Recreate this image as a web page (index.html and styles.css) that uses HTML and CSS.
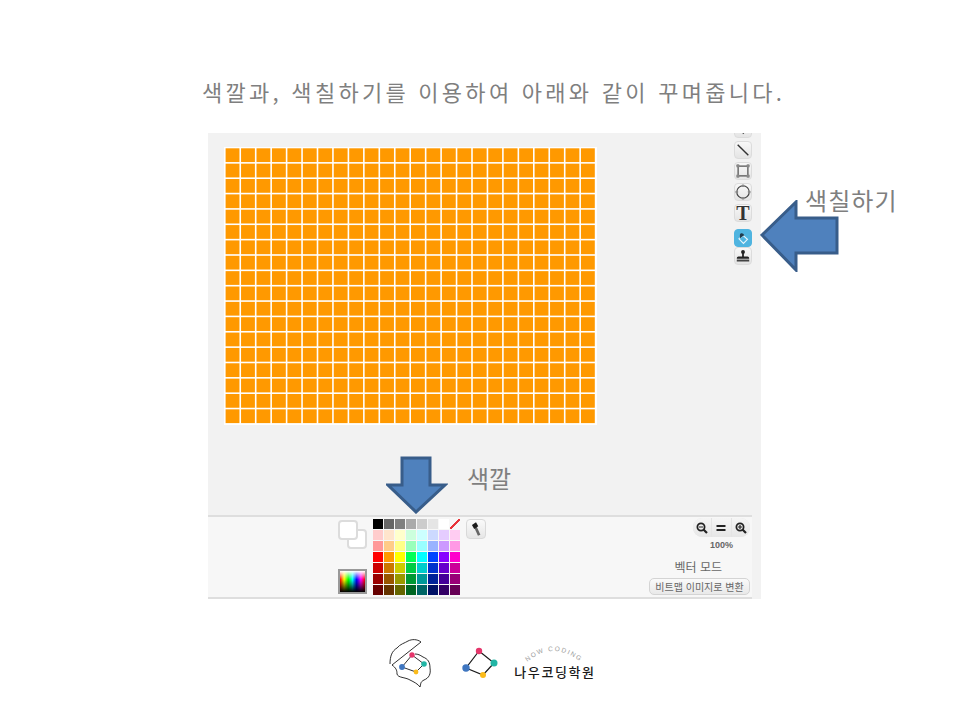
FILE: index.html
```html
<!DOCTYPE html>
<html lang="ko">
<head>
  <meta charset="UTF-8" />
  <title>색깔과 색칠하기</title>
  <link rel="stylesheet" href="styles.css">
</head>
<body>
  <div class="slide">
    <h1 class="title">색깔과, 색칠하기를 이용하여 아래와 같이 꾸며줍니다.</h1>

    <div class="editor">
      <div class="stage">
        <svg class="canvas" id="canvas" viewBox="0 0 373 278"></svg>
        <div class="tools">
          <div class="tool">
            <svg viewBox="0 0 18 18"><path d="M7 9l5 3-3 3z" fill="#333"/></svg>
          </div>
          <div class="tool">
            <svg viewBox="0 0 18 18"><path d="M3 3l12 12" stroke="#333" stroke-width="1.6"/></svg>
          </div>
          <div class="tool">
            <svg viewBox="0 0 18 18"><rect x="3.5" y="3.5" width="11" height="11" fill="none" stroke="#444" stroke-width="1.3"/><g fill="#888"><rect x="1.5" y="1.5" width="3.5" height="3.5" rx="1"/><rect x="13" y="1.5" width="3.5" height="3.5" rx="1"/><rect x="1.5" y="13" width="3.5" height="3.5" rx="1"/><rect x="13" y="13" width="3.5" height="3.5" rx="1"/></g></svg>
          </div>
          <div class="tool">
            <svg viewBox="0 0 18 18"><circle cx="9" cy="9" r="7" fill="none" stroke="#444" stroke-width="1.3"/><g fill="#888"><rect x="7.5" y=".5" width="3" height="3" rx="1"/><rect x="7.5" y="14.5" width="3" height="3" rx="1"/><rect x=".5" y="7.5" width="3" height="3" rx="1"/><rect x="14.5" y="7.5" width="3" height="3" rx="1"/></g></svg>
          </div>
          <div class="tool tool-text">T</div>
          <div class="tool tool-on">
            <svg viewBox="0 0 18 18"><path d="M9 6l5 4.5-4.5 4.5-5-5z" fill="none" stroke="#e8f6fc" stroke-width="1.3"/><path d="M5.5 9.5V5.5C5.5 3.5 8 3 9.5 4.5L10.5 6 8.5 7z" fill="#1f3b4d"/></svg>
          </div>
          <div class="tool">
            <svg viewBox="0 0 18 18"><circle cx="9" cy="4.5" r="2.2" fill="#222"/><path d="M8 5h2v4.5h4c1.2 0 2 1 2 2.500H2c0-1.500.8-2.500 2-2.500h4z" fill="#222"/><rect x="2" y="13" width="14" height="2.2" fill="#444"/></svg>
          </div>
        </div>
      </div>

      <div class="bar">
        <div class="current">
          <div class="swatches">
            <div class="swatch swatch-back"></div>
            <div class="swatch swatch-front"></div>
          </div>
          <div class="spectrum"></div>
        </div>
        <div class="palette" id="palette"></div>
        <div class="picker">
          <svg viewBox="0 0 20 20"><path d="M9 7L13.5 17" stroke="#666" stroke-width="3"/><path d="M5.5 5.5L10 2.5 12.5 7 8 10z" fill="#1c1c1c"/></svg>
        </div>
        <div class="view">
          <div class="zoom-group">
            <div class="zoom-btn">
              <svg viewBox="0 0 14 14"><circle cx="6" cy="6" r="3.6" fill="none" stroke="#222" stroke-width="1.8"/><path d="M8.5 8.5l3.5 3.5" stroke="#222" stroke-width="2.2"/><path d="M4 6h4" stroke="#222" stroke-width="1.2"/></svg>
            </div>
            <div class="zoom-btn">
              <svg viewBox="0 0 14 14"><path d="M2.5 5h9M2.5 9h9" stroke="#222" stroke-width="1.8"/></svg>
            </div>
            <div class="zoom-btn">
              <svg viewBox="0 0 14 14"><circle cx="6" cy="6" r="3.6" fill="none" stroke="#222" stroke-width="1.8"/><path d="M8.5 8.5l3.5 3.5" stroke="#222" stroke-width="2.2"/><path d="M4 6h4M6 4v4" stroke="#222" stroke-width="1.2"/></svg>
            </div>
          </div>
          <div class="percent">100%</div>
          <div class="mode">벡터 모드</div>
          <div class="convert">비트맵 이미지로 변환</div>
        </div>
      </div>
    </div>

    <div class="logos">
      <svg class="logo-brain" viewBox="0 0 44 50">
        <path d="M2 25C2 17 4 12 9 9 12 5 17 4 20 2 24 0 29 0 33 3L4 26C8 29 9 31 9 35 10 39 17 38 22 41 26 43 30 45 32 48 33 45 32 43 36 41 41 39 43 35 42 29 42 23 40 20 35 18 32 16 30 15 27 15" fill="none" stroke="#1a1a1a" stroke-width=".9"/>
        <path d="M24 16L36 25 28 33 14 28z" fill="none" stroke="#1a1a1a" stroke-width=".9"/>
        <circle cx="24" cy="16" r="2.7" fill="#e5366b"/>
        <circle cx="36" cy="25" r="2.8" fill="#21b5a5"/>
        <circle cx="28" cy="33" r="2.4" fill="#fbbb1a"/>
        <circle cx="14" cy="28" r="2.9" fill="#3f76c0"/>
      </svg>
      <svg class="logo-mark" viewBox="0 0 36 36">
        <path d="M19 3L34 15 23 27 6 20z" fill="none" stroke="#1a1a1a" stroke-width="1.2"/>
        <circle cx="19" cy="3" r="3.2" fill="#e5366b"/>
        <circle cx="34" cy="15" r="3.5" fill="#21b5a5"/>
        <circle cx="23" cy="27" r="3" fill="#fbbb1a"/>
        <circle cx="6" cy="20" r="3.7" fill="#3f76c0"/>
      </svg>
      <div class="logo-name">
        <svg class="logo-arc" viewBox="0 0 70 20">
          <path id="arc" d="M6 18Q33 -6 62 18" fill="none"/>
          <text><textPath href="#arc" startOffset="50%" text-anchor="middle">NOW CODING</textPath></text>
        </svg>
        <div class="logo-text">나우코딩학원</div>
      </div>
    </div>

    <!-- callouts on top of the editor -->
    <svg class="arrow arrow-left" viewBox="0 0 80 72"><path d="M2 35L36 2V18H77V53H36V70z" fill="#4f81bd" stroke="#385d8a" stroke-width="3"/></svg>
    <svg class="arrow arrow-down" viewBox="0 0 62 58"><path d="M16 2H44V29H59L30 56 2 29H16z" fill="#4f81bd" stroke="#385d8a" stroke-width="3"/></svg>
    <div class="callout callout-fill">색칠하기</div>
    <div class="callout callout-color">색깔</div>
  </div>

  <script>
    var colors = [
      ["#000000","#666666","#808080","#aaaaaa","#cccccc","#e5e5e5","#ffffff","none"],
      ["#ffcccc","#ffe5cc","#ffffcc","#ccffdd","#ccffff","#ccd9ff","#e5ccff","#ffccf2"],
      ["#ff9999","#ffcc88","#ffff88","#99ffbb","#99ffff","#99b3ff","#cc99ff","#ff99e5"],
      ["#ff0000","#ff9900","#ffff00","#00ff55","#00ffff","#0044ff","#8800ff","#ff00cc"],
      ["#cc0000","#cc7700","#cccc00","#00cc44","#00cccc","#0033cc","#6600cc","#cc0099"],
      ["#990000","#995500","#999900","#009933","#009999","#002299","#440099","#990077"],
      ["#660000","#663300","#666600","#006622","#006666","#001166","#330066","#660055"]
    ];

    var palette = document.getElementById("palette");
    colors.forEach(function (row) {
      row.forEach(function (c) {
        var cell = document.createElement("div");
        cell.className = c === "none" ? "color color-none" : "color";
        if (c !== "none") cell.style.background = c;
        palette.appendChild(cell);
      });
    });

    // 24 x 18 pixel art, drawn as svg so the fractional pitch stays even
    var canvas = document.getElementById("canvas");
    var cols = 24, rows = 18;
    var stepX = 370.8 / cols, stepY = 276.4 / rows;
    var ns = "http://www.w3.org/2000/svg";
    for (var y = 0; y < rows; y++) {
      for (var x = 0; x < cols; x++) {
        var r = document.createElementNS(ns, "rect");
        r.setAttribute("x", (1.6 + x * stepX).toFixed(2));
        r.setAttribute("y", (1.3 + y * stepY).toFixed(2));
        r.setAttribute("width", (stepX - 1.6).toFixed(2));
        r.setAttribute("height", (stepY - 1.6).toFixed(2));
        r.setAttribute("fill", "#ff9900");
        canvas.appendChild(r);
      }
    }
  </script>
</body>
</html>
```

FILE: styles.css
```css
* {
  box-sizing: border-box;
}

body {
  margin: 0;
  background: white;
}

.slide {
  position: relative;
  width: 960px;
  height: 720px;
  overflow: hidden;
  font-family: "Noto Sans CJK KR", "Noto Sans", sans-serif;
}

.title {
  margin: 0;
  padding: 73px 0 0 202px;
  height: 133px;
  color: #7f7f7f;
  font-size: 22px;
  font-weight: 400;
  letter-spacing: 3.27px;
  line-height: 36px;
  white-space: nowrap;
}

.editor {
  margin-left: 208px;
  width: 553px;
  height: 466px;
  background: #f2f2f2;
  display: flex;
  flex-direction: column;
  overflow: hidden;
}

.stage {
  height: 382px;
  display: flex;
  justify-content: space-between;
  padding: 14px 9px 0 16px;
}

.canvas {
  display: block;
  width: 373px;
  height: 278px;
  background: white;
}

.tools {
  width: 18px;
  margin-top: -27px;
  display: flex;
  flex-direction: column;
  gap: 3px;
}

.tool {
  flex: none;
  width: 18px;
  height: 18px;
  border: 1px solid #dcdcdc;
  border-radius: 4px;
  background: linear-gradient(#f8f8f8, #e4e4e4);
  display: flex;
  align-items: center;
  justify-content: center;
}

.tool svg {
  width: 16px;
  height: 16px;
}

.tool-text {
  font-family: "Liberation Serif", serif;
  font-weight: 700;
  font-size: 20px;
  color: #333;
  line-height: 1;
}

.tool-on {
  background: #4fb4e0;
  border-color: #4fb4e0;
  margin-top: 4px;
  margin-bottom: -3px;
}

.bar {
  width: 544px;
  height: 84px;
  background: #f7f7f7;
  border-top: 2px solid #dedede;
  border-bottom: 2px solid #dedede;
  display: flex;
  padding-left: 130px;
}

.current {
  width: 30px;
  padding: 3px 0 3px;
  display: flex;
  flex-direction: column;
  justify-content: space-between;
}

.swatches {
  position: relative;
  height: 30px;
}

.swatch {
  position: absolute;
  width: 20px;
  height: 20px;
  border: 2px solid #dcdcdc;
  border-radius: 4px;
  background: white;
}

.swatch-front {
  left: 0;
  top: 0;
}

.swatch-back {
  left: 9px;
  top: 9px;
}

.spectrum {
  width: 29px;
  height: 25px;
  border: 2px solid #999;
  background:
    linear-gradient(to bottom, transparent 40%, #000),
    linear-gradient(to bottom, #fff, transparent 40%),
    linear-gradient(to right, #f00, #ff0, #0f0, #0ff, #00f, #f0f, #f00);
}

.palette {
  margin: 2px 0 0 5px;
  display: grid;
  grid-template-columns: repeat(8, 10px);
  grid-auto-rows: 10px;
  gap: 1px;
}

.color-none {
  background: linear-gradient(135deg, transparent 42%, #e8343a 42%, #e8343a 58%, transparent 58%);
}

.picker {
  width: 20px;
  height: 20px;
  margin: 2px 0 0 6px;
  border: 1px solid #d9d9d9;
  border-radius: 4px;
  background: linear-gradient(#fafafa, #e6e6e6);
}

.picker svg {
  display: block;
  width: 18px;
  height: 18px;
}

.view {
  margin-left: auto;
  width: 102px;
  padding: 1px 2px 0 0;
  display: flex;
  flex-direction: column;
  align-items: flex-end;
  color: #666;
  font-family: "Liberation Sans", "Noto Sans CJK KR", sans-serif;
}

.zoom-group {
  display: flex;
  width: 57px;
  height: 19px;
  border-radius: 9px;
  background: #e4e4e4;
  overflow: hidden;
  gap: 1px;
}

.zoom-btn {
  flex: 1;
  background: linear-gradient(#f5f5f5, #e6e6e6);
  display: flex;
  align-items: center;
  justify-content: center;
}

.zoom-btn svg {
  width: 14px;
  height: 14px;
}

.percent {
  width: 57px;
  text-align: center;
  font-size: 9px;
  font-weight: 700;
  line-height: 12px;
  margin-top: 2px;
}

.mode {
  width: 100%;
  padding-right: 28px;
  text-align: right;
  font-family: "Noto Sans CJK KR", sans-serif;
  font-size: 12px;
  line-height: 16px;
  margin-top: 8px;
}

.convert {
  width: 101px;
  height: 17px;
  margin-top: 3px;
  border: 1px solid #d4d4d4;
  border-radius: 5px;
  background: linear-gradient(#fafafa, #e9e9e9);
  text-align: center;
  font-family: "Noto Sans CJK KR", sans-serif;
  font-size: 10px;
  line-height: 15px;
  white-space: nowrap;
}

.logos {
  padding: 40px 0 0 388px;
  display: flex;
  align-items: flex-start;
}

.logo-brain {
  width: 44px;
  height: 50px;
}

.logo-mark {
  width: 36px;
  height: 36px;
  margin: 9px 0 0 28px;
  overflow: visible;
}

.logo-name {
  margin: 6px 0 0 18px;
  width: 82px;
  text-align: center;
}

.logo-arc {
  display: block;
  width: 70px;
  height: 20px;
  margin: 0 auto;
  overflow: visible;
}

.logo-arc text {
  font-family: "Liberation Sans", sans-serif;
  font-size: 6.5px;
  letter-spacing: 1.5px;
  fill: #999;
}

.logo-text {
  color: #1a1a1a;
  font-size: 13px;
  font-weight: 500;
  letter-spacing: 1.6px;
  line-height: 14px;
  white-space: nowrap;
}

.arrow {
  position: absolute;
}

.arrow-left {
  left: 760px;
  top: 200px;
  width: 80px;
  height: 72px;
}

.arrow-down {
  left: 386px;
  top: 456px;
  width: 62px;
  height: 58px;
}

.callout {
  position: absolute;
  color: #7f7f7f;
  font-size: 24px;
  line-height: 30px;
  white-space: nowrap;
}

.callout-fill {
  left: 805px;
  top: 185px;
  letter-spacing: 1.1px;
}

.callout-color {
  left: 467px;
  top: 463px;
}
```
